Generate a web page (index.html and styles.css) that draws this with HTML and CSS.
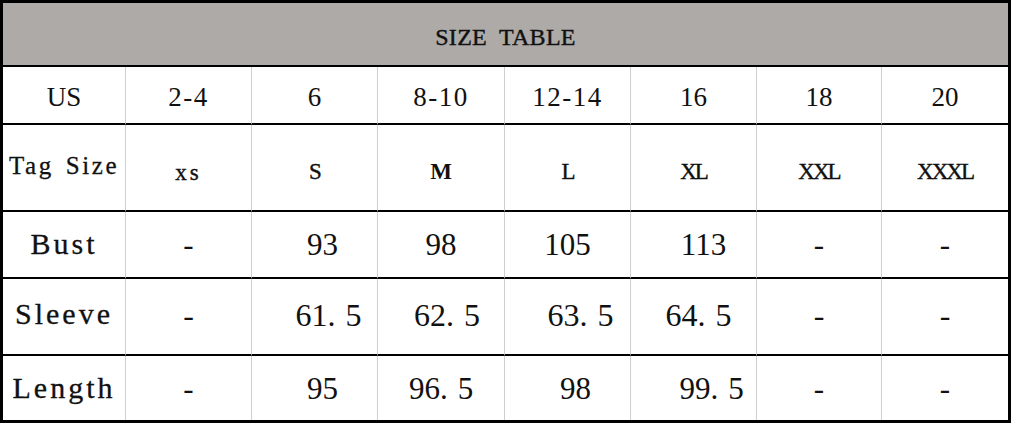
FILE: index.html
```html
<!DOCTYPE html>
<html>
<head>
<meta charset="utf-8">
<link rel="stylesheet" href="styles.css">
</head>
<body>
<div class="table">
  <div class="title">SIZE TABLE</div>

  <div class="cell r1 serif27">US</div>
  <div class="cell r1 serif27 dash">2-4</div>
  <div class="cell r1 serif27">6</div>
  <div class="cell r1 serif27 dash">8-10</div>
  <div class="cell r1 serif27 dash">12-14</div>
  <div class="cell r1 serif27">16</div>
  <div class="cell r1 serif27">18</div>
  <div class="cell r1 serif27 last">20</div>

  <div class="cell r2 tag">Tag Size</div>
  <div class="cell r2 sz wide">xs</div>
  <div class="cell r2 sz">S</div>
  <div class="cell r2 sz bold">M</div>
  <div class="cell r2 sz">L</div>
  <div class="cell r2 sz">XL</div>
  <div class="cell r2 sz">XXL</div>
  <div class="cell r2 sz last">XXXL</div>

  <div class="cell r3 label">Bust</div>
  <div class="cell r3 num">-</div>
  <div class="cell r3 num p16">93</div>
  <div class="cell r3 num">98</div>
  <div class="cell r3 num">105</div>
  <div class="cell r3 num p20">113</div>
  <div class="cell r3 num">-</div>
  <div class="cell r3 num last">-</div>

  <div class="cell r4 label">Sleeve</div>
  <div class="cell r4 num">-</div>
  <div class="cell r4 num p28">61<span class="pt">.</span>5</div>
  <div class="cell r4 num p12">62<span class="pt">.</span>5</div>
  <div class="cell r4 num p26">63<span class="pt">.</span>5</div>
  <div class="cell r4 num p10">64<span class="pt">.</span>5</div>
  <div class="cell r4 num">-</div>
  <div class="cell r4 num last">-</div>

  <div class="cell r5 label">Length</div>
  <div class="cell r5 num">-</div>
  <div class="cell r5 num p16">95</div>
  <div class="cell r5 num">96<span class="pt">.</span>5</div>
  <div class="cell r5 num p16">98</div>
  <div class="cell r5 num p36">99<span class="pt">.</span>5</div>
  <div class="cell r5 num">-</div>
  <div class="cell r5 num last">-</div>
</div>
</body>
</html>
```
FILE: styles.css
```css
html, body {
  margin: 0;
  padding: 0;
  background: #ffffff;
}

.table {
  box-sizing: border-box;
  width: 1011px;
  height: 423px;
  border: 3px solid #000;
  display: grid;
  grid-template-columns: 123px 126px 126px 127px 126px 126px 125px 126px;
  grid-template-rows: 64px 58px 87px 67px 77px 64px;
  color: #111;
}

.title {
  grid-column: 1 / -1;
  background: #adaaa8;
  border-bottom: 2px solid #000;
  display: flex;
  align-items: center;
  justify-content: center;
  font-family: "Liberation Serif", serif;
  font-size: 24px;
  letter-spacing: 0.3px;
  word-spacing: 6px;
  -webkit-text-stroke: 0.4px #111;
  padding-top: 6px;
  box-sizing: border-box;
}

.cell {
  box-sizing: border-box;
  border-right: 1px solid #cfcfcf;
  border-bottom: 2px solid #000;
  display: flex;
  align-items: center;
  justify-content: center;
  white-space: nowrap;
}

.cell.last { border-right: none; }
.r5 { border-bottom: none; }

.serif27 {
  font-family: "Liberation Serif", serif;
  font-size: 27px;
  padding-top: 4px;
}

.dash { letter-spacing: 1.5px; }

.tag {
  font-family: "Liberation Serif", serif;
  font-size: 25px;
  letter-spacing: 2.6px;
  word-spacing: 3px;
  -webkit-text-stroke: 0.3px #111;
  padding-bottom: 4px;
}

.sz {
  font-family: "Liberation Serif", serif;
  font-size: 23px;
  letter-spacing: -2px;
  -webkit-text-stroke: 0.4px #111;
  padding-top: 8px;
}

.sz.wide { letter-spacing: 3px; padding-top: 10px; }
.sz.bold { font-weight: bold; letter-spacing: 0; -webkit-text-stroke: 0; }

.label {
  font-family: "Liberation Serif", serif;
  font-size: 30px;
  letter-spacing: 3px;
  -webkit-text-stroke: 0.3px #111;
}

.r3.label { padding-bottom: 2px; }
.r4.label { padding-bottom: 6px; }
.r5.label { padding-bottom: 0; }

.num {
  font-family: "Liberation Serif", serif;
  font-size: 31px;
}

.r4.num { font-size: 32px; padding-bottom: 2px; }
.r5.num { padding-top: 2px; }

.pt { padding-right: 10px; }

.p10 { padding-left: 10px; }
.p12 { padding-left: 12px; }
.p16 { padding-left: 16px; }
.p20 { padding-left: 20px; }
.p26 { padding-left: 26px; }
.p28 { padding-left: 28px; }
.p36 { padding-left: 36px; }
```
